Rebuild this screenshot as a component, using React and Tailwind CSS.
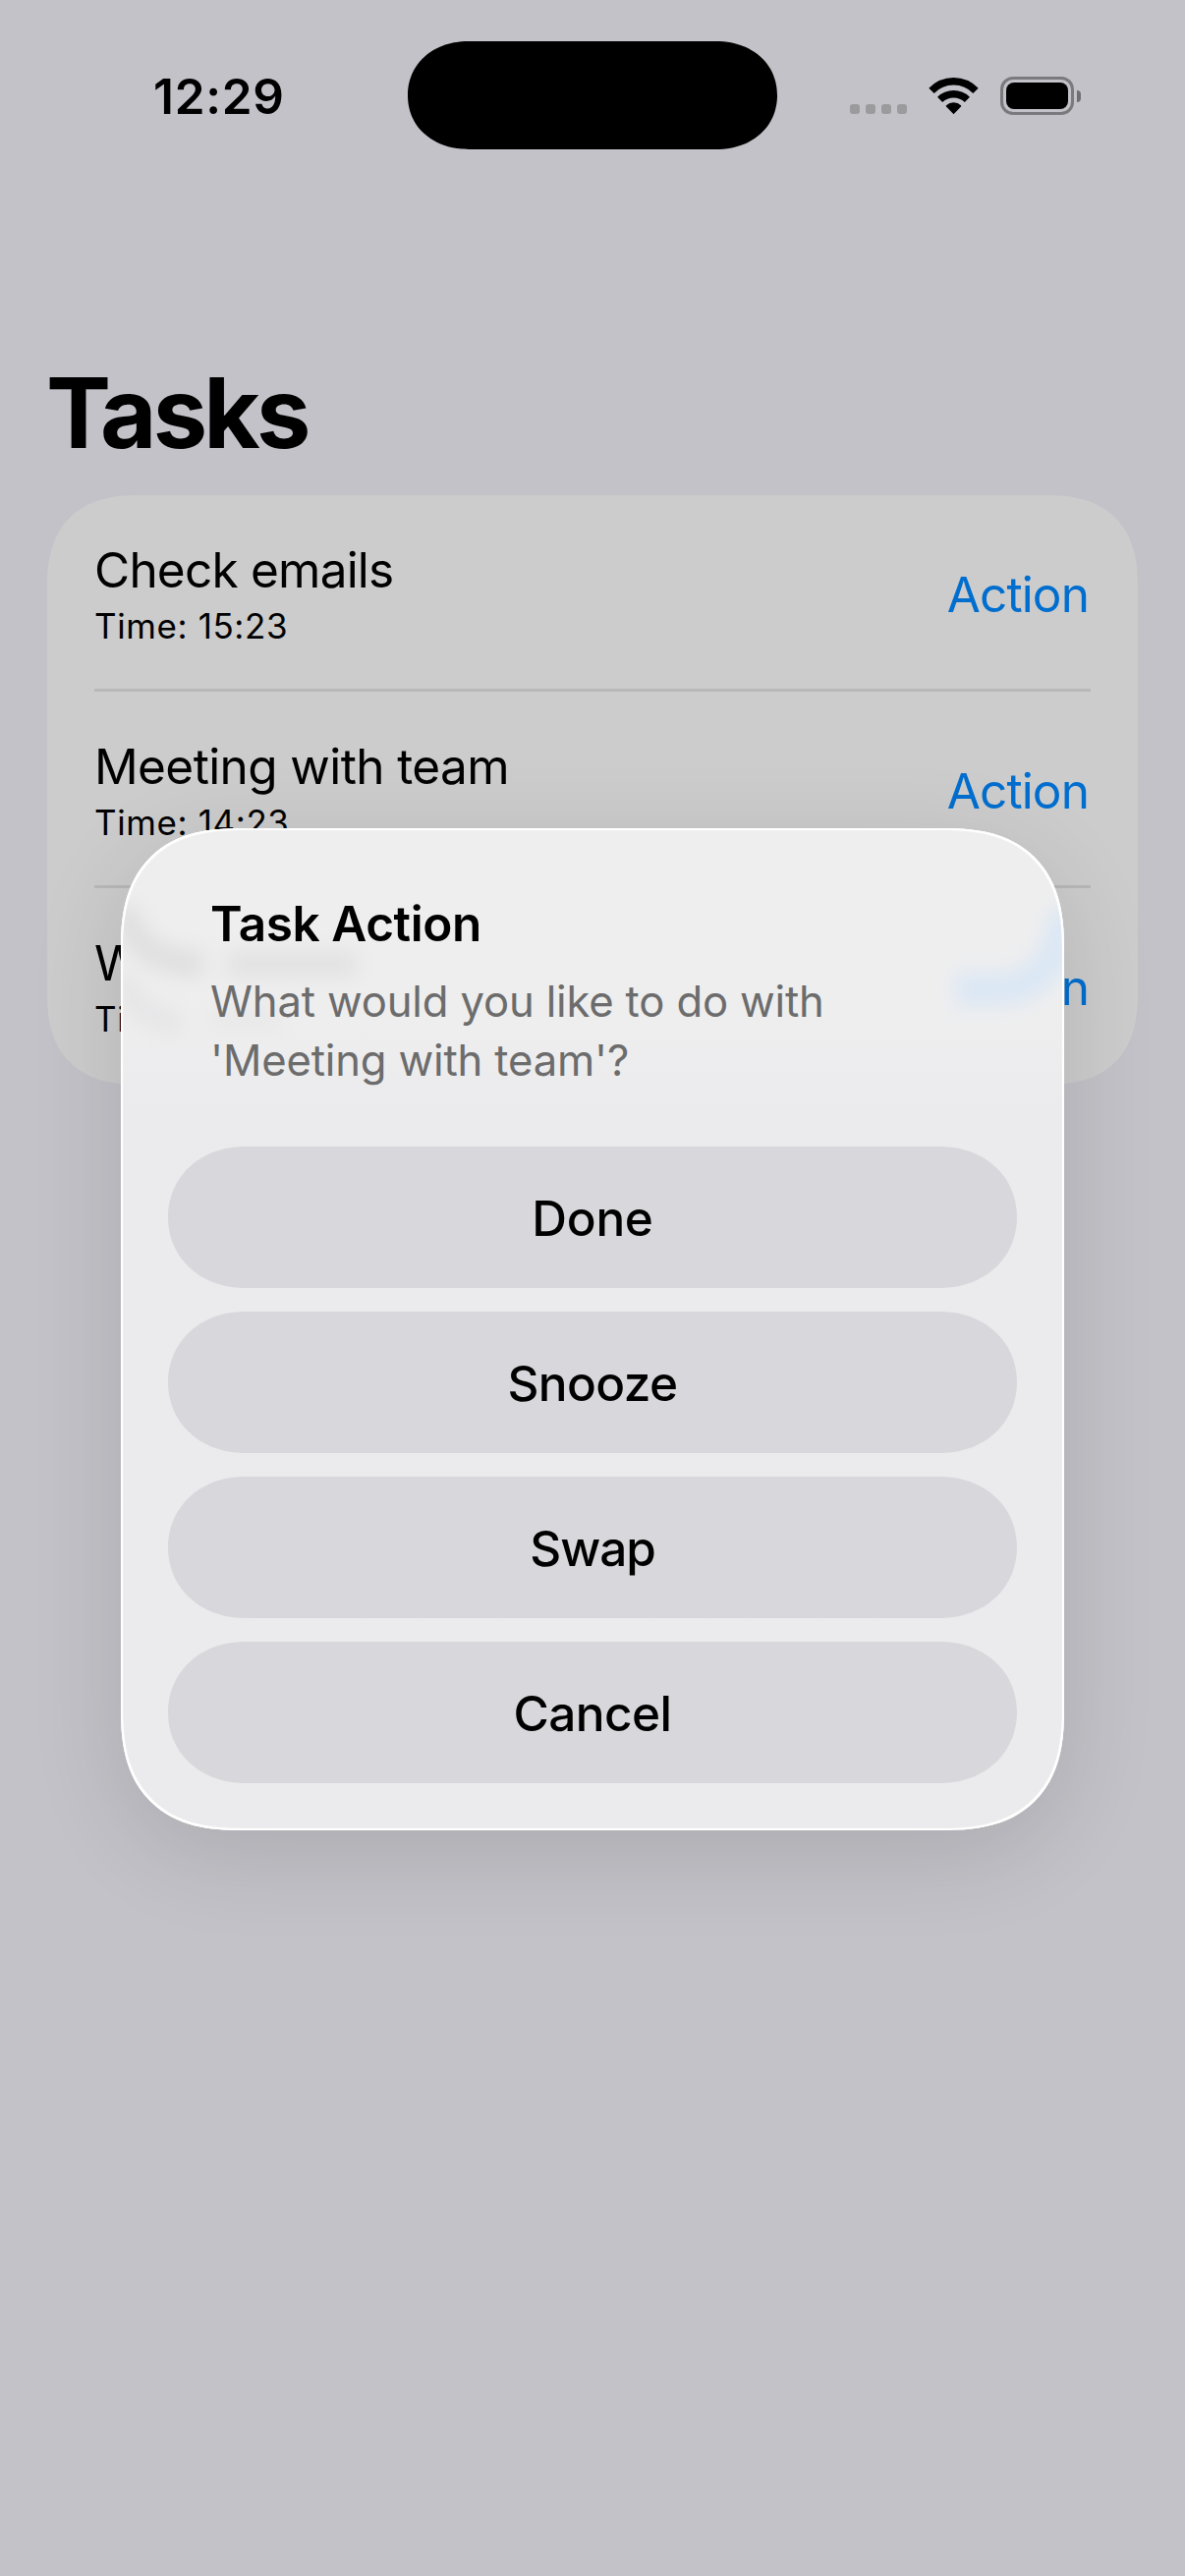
import React from 'react';

const TASKS = [
  { title: 'Check emails', time: 'Time: 15:23', tracking: 'tracking-[-0.78px]' },
  { title: 'Meeting with team', time: 'Time: 14:23', tracking: 'tracking-[-0.6px]' },
  { title: 'Write report', time: 'Time: 16:23', tracking: 'tracking-[-0.6px]' },
];

const ACTIONS = [
  { label: 'Done', tracking: 'tracking-[-0.3px]' },
  { label: 'Snooze', tracking: 'tracking-[-0.6px]' },
  { label: 'Swap', tracking: 'tracking-[-1px]' },
  { label: 'Cancel', tracking: 'tracking-[-0.55px]' },
];

function StatusBar() {
  return (
    <header className="flex h-[186px] items-start">
      <div className="w-[415px] pl-[156px] pt-[68px] text-[49.5px] font-semibold leading-[60px] tracking-[0.7px]">
        12:29
      </div>
      <div className="mt-[42px] h-[110px] w-[376px] rounded-[62px/55px] bg-black [corner-shape:superellipse(1.08)]" />
      <div className="flex items-start pl-[74px] pt-[78px]">
        <div className="mt-7 flex gap-1.5">
          {[0, 1, 2, 3].map((i) => (
            <span key={i} className="size-2.5 rounded-[3px] bg-[#9b9b9d]" />
          ))}
        </div>
        <svg className="ml-[22px] mt-px h-[38px] w-[51px]" viewBox="0 0 51 38" aria-hidden="true">
          <g fill="none" stroke="#000" strokeWidth="7.4">
            <path d="M3 13.4A31 31 0 0 1 48 13.4" />
            <path d="M11.6 22.4A20 20 0 0 1 39.4 22.4" />
          </g>
          <path d="M25.500 37.200L18 29.600A1 1 0 0 1 18 28.200A11 11 0 0 1 33 28.200A1 1 0 0 1 33 29.600Z" />
        </svg>
        <div className="ml-[22px] flex items-center">
          <div className="h-[39px] w-[75px] rounded-[13px] border-3 border-[#7a7a7c] p-[3px]">
            <div className="h-full rounded-[8px] bg-black" />
          </div>
          <div className="ml-[3px] h-3 w-1 rounded-r-full bg-[#6f6f71]" />
        </div>
      </div>
    </header>
  );
}

function TaskRow({ task, last }) {
  return (
    <li className="relative flex h-[200px] items-center justify-between px-12">
      <div>
        <div className={`text-[49.5px] leading-[66px] ${task.tracking}`}>{task.title}</div>
        <div className="text-[35px] leading-[48px] tracking-[0.6px]">{task.time}</div>
      </div>
      <button className="pr-0.5 pt-0.5 text-[49.5px] leading-[66px] tracking-[-0.9px] text-[#006ecf]">
        Action
      </button>
      {!last && <div className="absolute inset-x-12 bottom-0 h-[3px] bg-[#b8b8b8]" />}
    </li>
  );
}

/* Soft, refracted traces of the list seen through the glass panel. */
function GlassTraces() {
  return (
    <svg className="absolute inset-0 h-[360px] w-[960px]" viewBox="0 0 960 360" fill="none" aria-hidden="true">
      <defs>
        <filter id="soft" x="-30%" y="-80%" width="160%" height="260%">
          <feGaussianBlur stdDeviation="10" />
        </filter>
      </defs>
      <g filter="url(#soft)" strokeWidth="26">
        <path d="M4 80C8 116 34 138 84 138" stroke="#dfdfdf" />
        <path d="M108 138H240" stroke="#e2e2e2" />
        <path d="M0 150C8 184 36 198 62 198" stroke="#e6e6e7" />
        <path d="M90 194H165" stroke="#e9e9ea" />
        <path d="M850 164H896C936 160 956 134 962 84" stroke="#dae7f5" strokeWidth="32" />
      </g>
    </svg>
  );
}

function TaskDialog() {
  return (
    <div
      role="dialog"
      className="absolute left-[123px] top-[843px] h-[1020px] w-[960px] rounded-[122px] shadow-[0_24px_96px_rgba(0,0,0,0.12)] [corner-shape:superellipse(1.31)]"
    >
      <div className="relative h-full overflow-hidden rounded-[122px] bg-linear-to-b from-[#eeeeee] from-0% via-[#eeeeef] via-20% to-[#ebebed] to-28% px-12 [corner-shape:superellipse(1.31)]">
        <GlassTraces />
        <div className="relative flex h-[324px] flex-col pl-[43px] pt-[64px]">
          <h2 className="text-[49.5px] font-semibold leading-[66px] tracking-[-0.4px]">Task Action</h2>
          <p className="mt-[17px] text-[43.6px] leading-[60px] tracking-[-0.15px] text-[#6c6c6c]">
            What would you like to do with
            <br />
            'Meeting with team'?
          </p>
        </div>
        <div className="relative flex flex-col gap-6">
          {ACTIONS.map((a) => (
            <button
              key={a.label}
              className={`h-36 rounded-[78px/72px] bg-[#d8d7dc] pt-[2px] text-center text-[49.5px] font-medium [corner-shape:superellipse(1.05)] ${a.tracking}`}
            >
              {a.label}
            </button>
          ))}
        </div>
      </div>
      <div className="pointer-events-none absolute inset-0 rounded-[122px] shadow-[inset_0_0_0_2px_#ffffff,inset_0_0_3px_1px_rgba(255,255,255,0.8)] [corner-shape:superellipse(1.31)]" />
    </div>
  );
}

export default function App() {
  return (
    <div className="relative h-[2622px] w-[1206px] overflow-hidden bg-[#c3c2c8] font-['Inter',sans-serif] text-black">
      <StatusBar />
      <main className="px-12 pt-[174px]">
        <h1 className="-ml-px text-[99px] font-bold leading-[120px] tracking-[-3.8px]">Tasks</h1>
        <ul className="mt-6 rounded-[94px] bg-[#cccccc] [corner-shape:superellipse(1.31)]">
          {TASKS.map((t, i) => (
            <TaskRow key={t.title} task={t} last={i === TASKS.length - 1} />
          ))}
        </ul>
      </main>
      <TaskDialog />
    </div>
  );
}
